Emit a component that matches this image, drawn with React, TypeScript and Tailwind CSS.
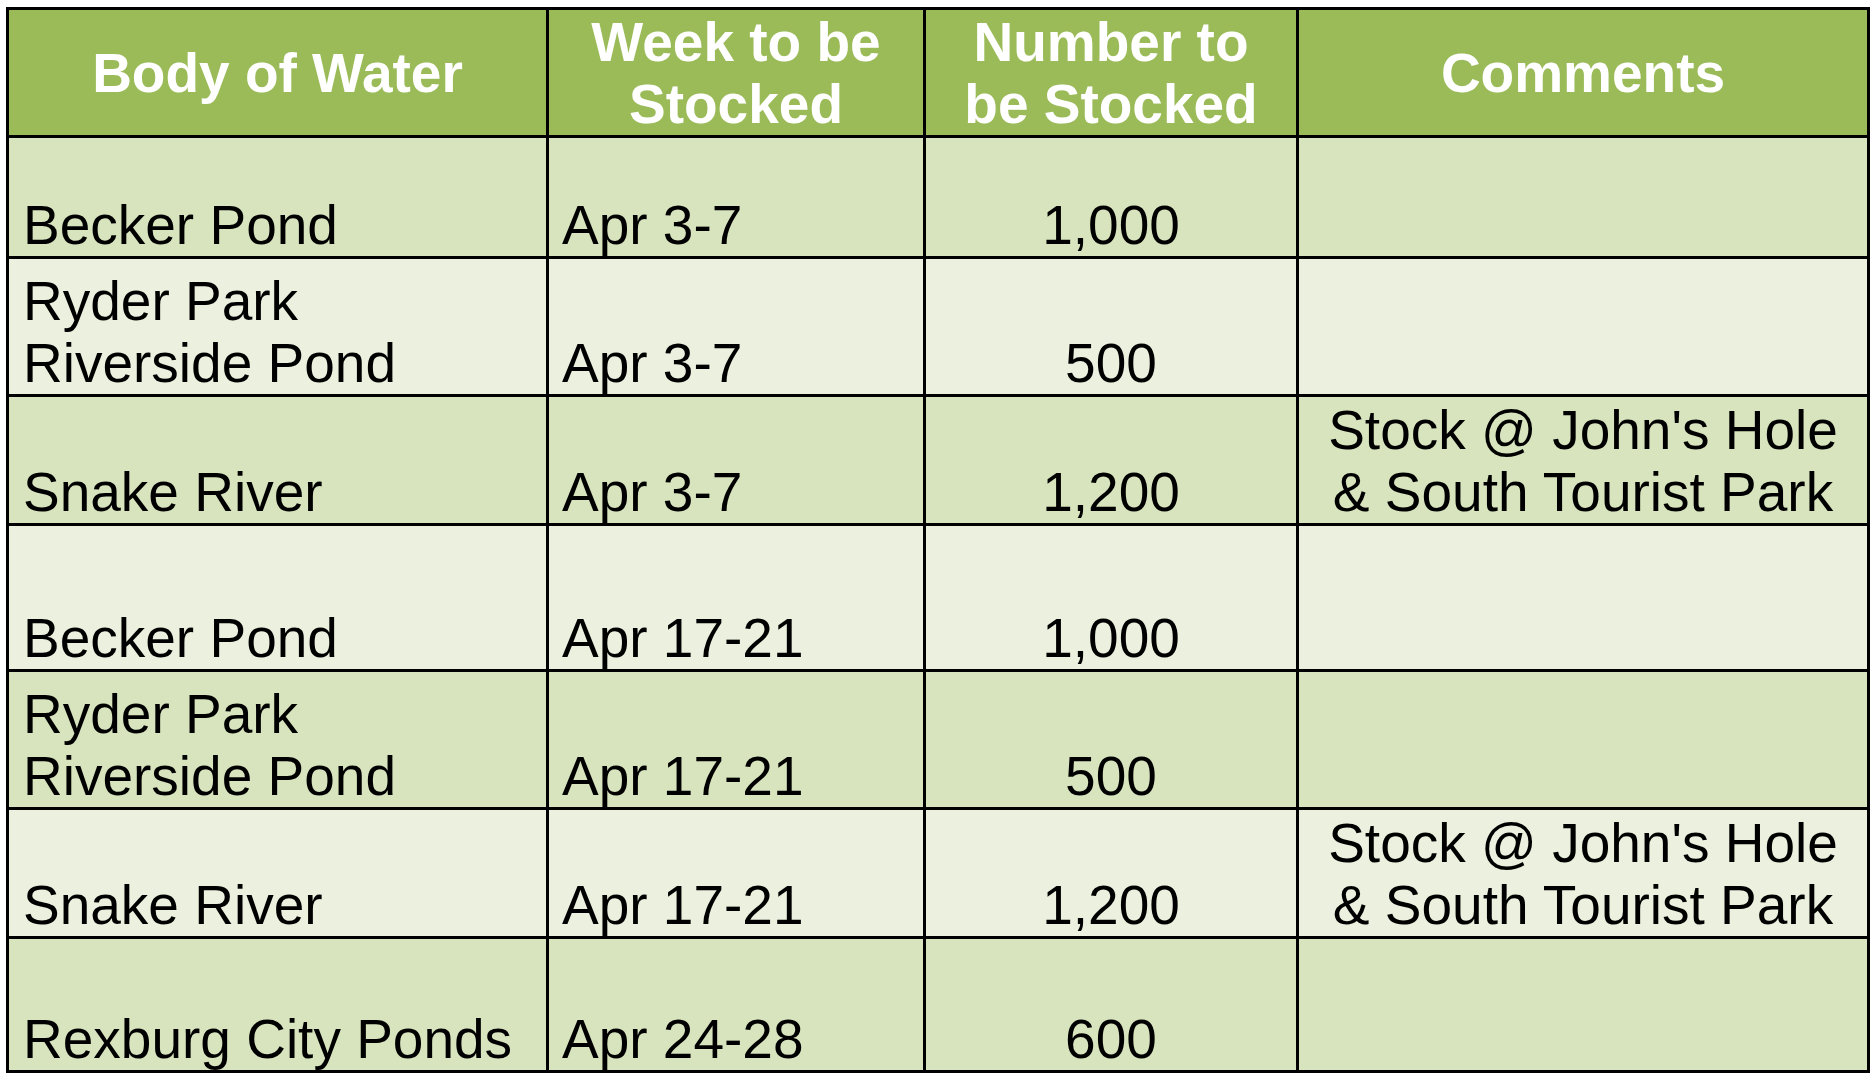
type Row = {
  water: string[]
  week: string
  count: string
  comment?: string[]
  height: string
  tone: 'dark' | 'light'
}

const rows: Row[] = [
  { water: ['Becker Pond'], week: 'Apr 3-7', count: '1,000', height: 'h-[121px]', tone: 'dark' },
  { water: ['Ryder Park', 'Riverside Pond'], week: 'Apr 3-7', count: '500', height: 'h-[138px]', tone: 'light' },
  {
    water: ['Snake River'],
    week: 'Apr 3-7',
    count: '1,200',
    comment: ["Stock @ John's Hole", '& South Tourist Park'],
    height: 'h-[129px]',
    tone: 'dark',
  },
  { water: ['Becker Pond'], week: 'Apr 17-21', count: '1,000', height: 'h-[146px]', tone: 'light' },
  { water: ['Ryder Park', 'Riverside Pond'], week: 'Apr 17-21', count: '500', height: 'h-[138px]', tone: 'dark' },
  {
    water: ['Snake River'],
    week: 'Apr 17-21',
    count: '1,200',
    comment: ["Stock @ John's Hole", '& South Tourist Park'],
    height: 'h-[129px]',
    tone: 'light',
  },
  { water: ['Rexburg City Ponds'], week: 'Apr 24-28', count: '600', height: 'h-[134px]', tone: 'dark' },
]

const headers = [['Body of Water'], ['Week to be', 'Stocked'], ['Number to', 'be Stocked'], ['Comments']]

function Lines({ lines }: { lines: string[] }) {
  return (
    <div>
      {lines.map((l) => (
        <div key={l} className="whitespace-nowrap">
          {l}
        </div>
      ))}
    </div>
  )
}

export default function App() {
  return (
    <div className="min-h-screen bg-white pl-[6px] pt-[7px] font-['Liberation_Sans',Arial,sans-serif] text-[55px] leading-[62px] text-black">
      <div className="grid w-max grid-cols-[540px_377px_373px_571px] border-l-[3px] border-t-[3px] border-black">
        {headers.map((h, i) => (
          <div
            key={i}
            className="flex h-[128px] items-center justify-center border-b-[3px] border-r-[3px] border-black bg-[#9bbb59] text-center font-bold text-white"
          >
            <Lines lines={h} />
          </div>
        ))}
        {rows.map((r, i) => {
          const bg = r.tone === 'dark' ? 'bg-[#d7e4bd]' : 'bg-[#ebf1de]'
          const cell = `flex items-end border-b-[3px] border-r-[3px] border-black ${bg} ${r.height}`
          return [
            <div key={`a${i}`} className={`${cell} pl-[14px]`}>
              <Lines lines={r.water} />
            </div>,
            <div key={`b${i}`} className={`${cell} pl-[13px]`}>
              <Lines lines={[r.week]} />
            </div>,
            <div key={`c${i}`} className={`${cell} justify-center`}>
              <Lines lines={[r.count]} />
            </div>,
            <div key={`d${i}`} className={`${cell} justify-center text-center`}>
              {r.comment ? <Lines lines={r.comment} /> : null}
            </div>,
          ]
        })}
      </div>
    </div>
  )
}
